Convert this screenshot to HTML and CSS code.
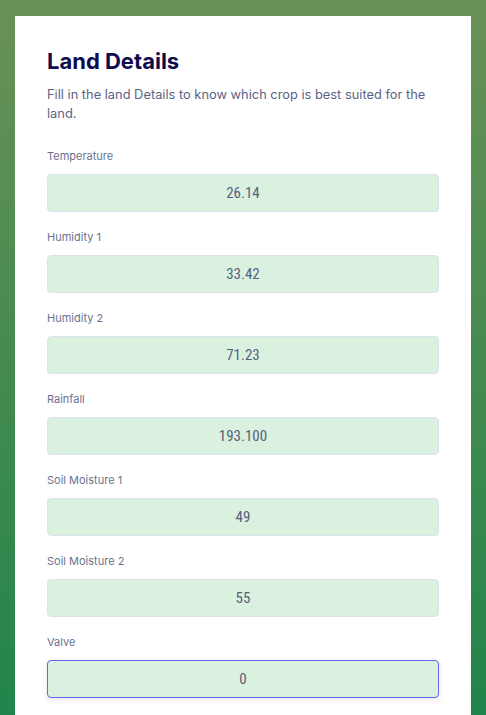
FILE: index.html
```html
<!DOCTYPE html>
<html lang="en">
<head>
<meta charset="utf-8">
<title>Land Details</title>
<link rel="stylesheet" href="styles.css">
</head>
<body>
<main class="card">
  <h1 class="title">Land Details</h1>
  <p class="subtitle">Fill in the land Details to know which crop is best suited for the land.</p>
  <form class="form">
    <div class="field"><label class="label">Temperature</label><input class="input" value="26.14"></div>
    <div class="field"><label class="label">Humidity 1</label><input class="input" value="33.42"></div>
    <div class="field"><label class="label">Humidity 2</label><input class="input" value="71.23"></div>
    <div class="field"><label class="label">Rainfall</label><input class="input" value="193.100"></div>
    <div class="field"><label class="label">Soil Moisture 1</label><input class="input" value="49"></div>
    <div class="field"><label class="label">Soil Moisture 2</label><input class="input" value="55"></div>
    <div class="field"><label class="label">Valve</label><input class="input input-focus" value="0"></div>
  </form>
</main>
</body>
</html>
```
FILE: styles.css
```css
* { box-sizing: border-box; }
html, body { margin: 0; padding: 0; }
body {
  min-height: 715px;
  background: linear-gradient(180deg, #6a9156 0%, #1f844a 100%);
  font-family: Inter, "Noto Sans", sans-serif;
  padding: 16px 15px 0 15px;
}
.card {
  background: #ffffff;
  padding: 29px 32px 40px 32px;
  min-height: 720px;
}
.title {
  margin: 0;
  font-size: 22px;
  line-height: 32px;
  font-weight: 700;
  color: #0f0c4e;
}
.subtitle {
  margin: 8px 0 0 0;
  font-size: 12.85px;
  line-height: 19px;
  color: #5b6384;
}
.form {
  margin-top: 25px;
  display: flex;
  flex-direction: column;
  gap: 17px;
}
.field { display: flex; flex-direction: column; }
.label {
  font-size: 11px;
  line-height: 16px;
  color: #6b7290;
  margin-bottom: 10px;
}
.input {
  height: 38px;
  width: 100%;
  border: 1px solid #dde3ec;
  border-radius: 4px;
  background: #d9f1de;
  text-align: center;
  font-family: "Liberation Sans Narrow", "Roboto Condensed", "DejaVu Sans Condensed", sans-serif;
  font-size: 15px;
  font-weight: 400;
  color: #585e80;
  outline: none;
  padding: 0 8px;
}
.input-focus {
  border-color: #6366f1;
  box-shadow: 0 2px 6px rgba(60, 60, 90, 0.12);
}
```
